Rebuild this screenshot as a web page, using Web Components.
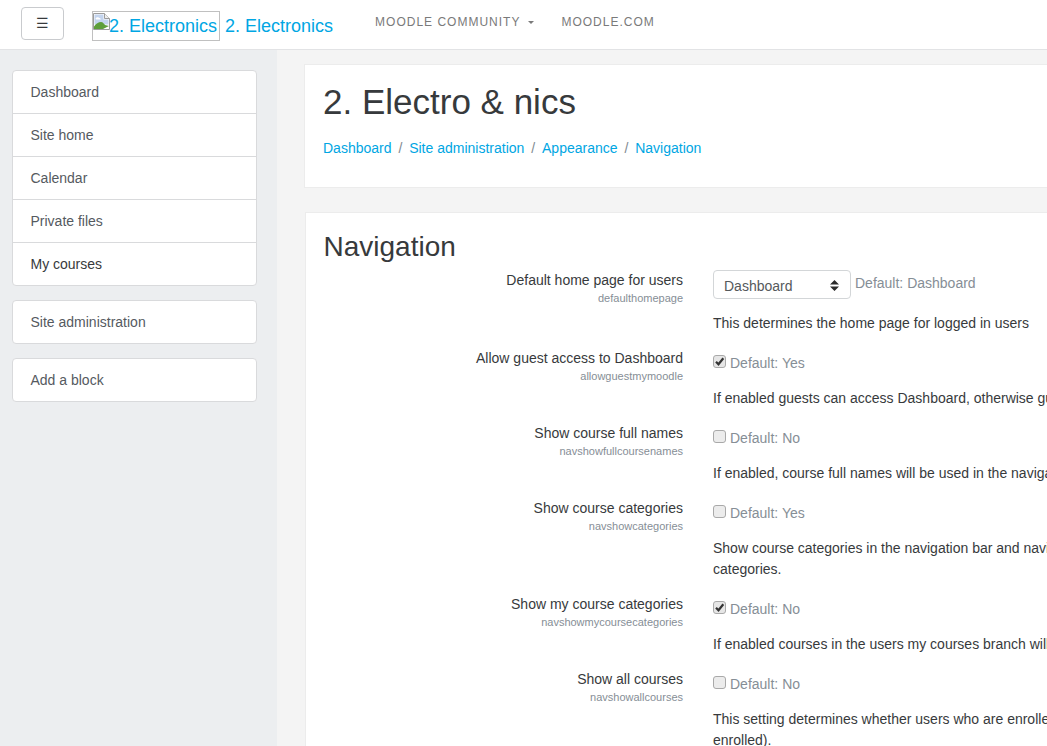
<!DOCTYPE html>
<html>
<head>
<meta charset="utf-8">
<title>Navigation</title>
<style>
html, body { margin: 0; padding: 0; height: 746px; overflow: hidden; }
body { font-family: "Liberation Sans", Arial, sans-serif; font-size: 14px; line-height: 21px; color: #373a3c; background: #f4f4f4; }
</style>
</head>
<body>
<template id="broken-tpl">
<svg width="17" height="17" viewBox="0 0 17 17" style="display:block"><path d="M.5.5h11l5 5v11H.5z" fill="#fff" stroke="#9c9c9c"/><path d="M11.500.5v5h5" fill="#eee" stroke="#9c9c9c"/><path d="M1.500 1.500h9v5h5v5H1.500z" fill="#c3d4ee"/><path d="M2.500 5.500c1-1.500 3-1.500 4-.5 1 .3 1.500 1 1.200 1.500H3z" fill="#fff"/><path d="M1 16v-2.500c2-3 4.500-4.500 7-4.500 2 0 3 2 4 3l4 1v3z" fill="#5d9e3a"/><path d="M10 16l6-3v3z" fill="#fff"/></svg>
</template>

<site-page>
  <site-header slot="header"></site-header>
  <side-nav slot="side"></side-nav>
  <page-head slot="main" title="2. Electro &amp; nics"></page-head>
  <settings-card slot="main" heading="Navigation">
    <setting-row label="Default home page for users" name="defaulthomepage" type="select" def="Default: Dashboard">This determines the home page for logged in users</setting-row>
    <setting-row label="Allow guest access to Dashboard" name="allowguestmymoodle" checked def="Default: Yes">If enabled guests can access Dashboard, otherwise guests will be redirected to the site front page.</setting-row>
    <setting-row label="Show course full names" name="navshowfullcoursenames" def="Default: No">If enabled, course full names will be used in the navigation rather than short names.</setting-row>
    <setting-row label="Show course categories" name="navshowcategories" def="Default: Yes">Show course categories in the navigation bar and navigation blocks.<br>categories.</setting-row>
    <setting-row label="Show my course categories" name="navshowmycoursecategories" checked def="Default: No">If enabled courses in the users my courses branch will be shown in categories.</setting-row>
    <setting-row label="Show all courses" name="navshowallcourses" def="Default: No">This setting determines whether users who are enrolled in courses can see all courses (or only those<br>enrolled).</setting-row>
  </settings-card>
</site-page>

<script>
class SitePage extends HTMLElement {
  constructor() {
    super();
    this.attachShadow({ mode: "open" });
    this.shadowRoot.innerHTML = `
      <style>
        :host { display: flex; flex-direction: column; width: 1047px; height: 746px; overflow: hidden; }
        .body { display: flex; flex: 1; min-height: 0; }
        aside { flex: none; box-sizing: border-box; width: 277px; padding: 20px 20px 0 12px; background: #eceef0; }
        main { flex: none; width: 800px; padding: 14px 0 0 28px; }
      </style>
      <slot name="header"></slot>
      <div class="body">
        <aside><slot name="side"></slot></aside>
        <main><slot name="main"></slot></main>
      </div>`;
  }
}

class SiteHeader extends HTMLElement {
  constructor() {
    super();
    this.attachShadow({ mode: "open" });
    this.shadowRoot.innerHTML = `
      <style>
        :host { display: flex; align-items: center; height: 49px; background: #fff; border-bottom: 1px solid #e2e3e5; flex: none; }
        .toggle { width: 43px; height: 33px; box-sizing: border-box; margin: -3px 0 0 21px; border: 1px solid #c9cbce; border-radius: 4px; display: flex; align-items: center; justify-content: center; font-size: 14px; color: #373a3c; }
        .brand { display: flex; align-items: center; margin-left: 28px; font-size: 18px; color: #00a6e3; }
        .img { display: flex; box-sizing: border-box; width: 128px; height: 30px; border: 1px solid #c0c0c0; overflow: hidden; white-space: nowrap; margin: 2px 5px 0 0; padding-top: 4px; }
        .img span { display: block; margin: -3px -1px 0 0; height: 17px; }
        .name { margin-top: 4px; }
        nav { display: flex; margin-left: 42px; font-size: 12px; letter-spacing: 1px; color: #7a7a7a; margin-top: -4px; }
        nav span { display: flex; align-items: center; }
        nav span + span { margin-left: 27px; }
        .caret { width: 0; height: 0; border: 3.500px solid transparent; border-top-color: #7a7a7a; border-bottom: 0; margin-left: 8px; }
      </style>
      <div class="toggle">☰</div>
      <div class="brand">
        <div class="img"><span id="ic"></span>2. Electronics</div>
        <div class="name">2. Electronics</div>
      </div>
      <nav>
        <span>MOODLE COMMUNITY<i class="caret"></i></span>
        <span>MOODLE.COM</span>
      </nav>`;
    this.shadowRoot.getElementById("ic").appendChild(document.getElementById("broken-tpl").content.cloneNode(true));
  }
}

class SideNav extends HTMLElement {
  constructor() {
    super();
    this.attachShadow({ mode: "open" });
    this.shadowRoot.innerHTML = `
      <style>
        :host { display: block; }
        ul { list-style: none; margin: 0 0 14px; padding: 0; background: #fff; border: 1px solid #d9dadc; border-radius: 4px; }
        li { height: 42px; line-height: 42px; padding-left: 17.500px; color: #555a5f; border-top: 1px solid #d9dadc; }
        li:first-child { border-top: 0; }
        .dark { color: #373a3c; }
      </style>
      <ul>
        <li>Dashboard</li>
        <li>Site home</li>
        <li>Calendar</li>
        <li>Private files</li>
        <li class="dark">My courses</li>
      </ul>
      <ul><li>Site administration</li></ul>
      <ul><li>Add a block</li></ul>`;
  }
}

class PageHead extends HTMLElement {
  constructor() {
    super();
    this.attachShadow({ mode: "open" });
    this.shadowRoot.innerHTML = `
      <style>
        :host { display: block; height: 124px; box-sizing: border-box; margin: 0 0 24px -1px; background: #fff; border: 1px solid #ececec; padding: 14px 18px 0; }
        h1 { margin: 0; font-size: 35px; font-weight: 400; line-height: 45px; color: #373a3c; }
        .crumbs { display: flex; margin-top: 14px; color: #00a6e3; }
        .sep { color: #818a91; margin: 0 6.900px; }
      </style>
      <h1></h1>
      <div class="crumbs">
        <span>Dashboard</span><span class="sep">/</span>
        <span>Site administration</span><span class="sep">/</span>
        <span>Appearance</span><span class="sep">/</span>
        <span>Navigation</span>
      </div>`;
    this.shadowRoot.querySelector("h1").textContent = this.getAttribute("title");
  }
}

class SettingsCard extends HTMLElement {
  constructor() {
    super();
    this.attachShadow({ mode: "open" });
    this.shadowRoot.innerHTML = `
      <style>
        :host { display: block; background: #fff; border: 1px solid #ececec; padding: 16px 0 0 18px; height: 700px; }
        h2 { margin: 0 0 5px -.5px; font-size: 28px; font-weight: 400; line-height: 36px; color: #373a3c; }
      </style>
      <h2></h2>
      <slot></slot>`;
    this.shadowRoot.querySelector("h2").textContent = this.getAttribute("heading");
  }
}

class SettingRow extends HTMLElement {
  constructor() {
    super();
    this.attachShadow({ mode: "open" });
    const isSelect = this.getAttribute("type") === "select";
    const on = this.hasAttribute("checked");
    const control = isSelect
      ? `<div class="select">Dashboard<svg width="9" height="11" viewBox="0 0 9 11"><path d="M4.500 0L9 4.500H0zM4.500 11L0 6.500H9z" fill="#2b2b2b"/></svg></div>`
      : `<svg class="check" width="13" height="13" viewBox="0 0 13 13"><rect x=".5" y=".5" width="12" height="12" rx="2.500" fill="${on ? "#e6e6e6" : "#ececec"}" stroke="#a9a9a9"/>${on ? '<path d="M3 6.700l2.500 2.600 4.800-6" fill="none" stroke="#333" stroke-width="2.200"/>' : ""}</svg>`;
    this.shadowRoot.innerHTML = `
      <style>
        :host { display: grid; grid-template-columns: 359px 1fr; column-gap: 30px; padding-bottom: 14px; }
        .left { text-align: right; }
        .name { font-size: 11px; line-height: 14px; color: #868e96; }
        .ctl { display: flex; align-items: flex-start; height: ${isSelect ? 43 : 40}px; color: #868e96; }
        .def { padding-top: ${isSelect ? 3 : 5}px; }
        .select { display: flex; align-items: center; justify-content: space-between; box-sizing: border-box; width: 138px; height: 29px; padding: 4px 11px 0 10px; border: 1px solid #d3d6d8; border-radius: 4px; color: #55595c; margin-right: 4px; }
        .select svg { margin-top: -3px; }
        .check { margin: 7px 4px 0 0; flex: none; }
        .desc { color: #373a3c; white-space: nowrap; }
      </style>
      <div class="left"><div></div><div class="name"></div></div>
      <div class="right">
        <div class="ctl">${control}<span class="def"></span></div>
        <div class="desc"><slot></slot></div>
      </div>`;
    this.shadowRoot.querySelector(".left").firstElementChild.textContent = this.getAttribute("label");
    this.shadowRoot.querySelector(".name").textContent = this.getAttribute("name");
    this.shadowRoot.querySelector(".def").textContent = this.getAttribute("def");
  }
}

customElements.define("site-page", SitePage);
customElements.define("site-header", SiteHeader);
customElements.define("side-nav", SideNav);
customElements.define("page-head", PageHead);
customElements.define("settings-card", SettingsCard);
customElements.define("setting-row", SettingRow);
</script>
</body>
</html>
